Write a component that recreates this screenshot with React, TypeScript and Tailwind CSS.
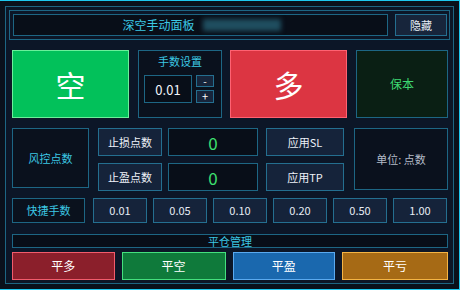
import React from "react";

const font = { fontFamily: '"Noto Sans CJK SC", "Noto Sans", sans-serif' };

export default function App() {
  const quick = ["0.01", "0.05", "0.10", "0.20", "0.50", "1.00"];
  return (
    <div
      style={font}
      className="w-[460px] h-[290px] bg-[#0a111c] border-t border-r border-b border-[#1ec8f0] pt-[5px] pl-[5px] pr-[5px] pb-[5px] box-border"
    >
      <div className="w-[449px] h-[278px] border border-[#1d6684] bg-[#0c1627] box-border flex flex-col">
        {/* header */}
        <div className="mt-[3px] ml-[3px] w-[441px] h-[30px] border border-[#1d6684] box-border flex items-center pl-[3px] pr-[2px] gap-[7px]">
          <div className="w-[375px] h-[22px] border border-[#1d6684] bg-[#080e18] box-border flex items-center justify-center text-[12px] text-[#3cc8e4] leading-none">
            <span className="ml-[2px]">深空手动面板</span>
            <span className="ml-[8px] w-[78px] h-[12px] blur-[2.5px] bg-[#1f4e60]"></span>
          </div>
          <div className="w-[52px] h-[22px] border border-[#246f90] bg-[#17253b] box-border flex items-center justify-center text-[11px] text-[#e8eef6] leading-none">
            隐藏
          </div>
        </div>

        <div className="ml-[6px] mt-[10px] w-[436px] flex flex-col">
          {/* row 1 */}
          <div className="flex h-[68px]">
            <div className="w-[117px] h-full bg-[#02c15a] border border-[#6af09a] box-border flex items-center justify-center text-[30px] text-white leading-none">
              空
            </div>
            <div className="ml-[9px] w-[84px] h-full border border-[#1d6684] bg-[#0a111d] box-border flex flex-col items-center">
              <div className="mt-[5px] text-[11px] text-[#3cc8e4] leading-none">手数设置</div>
              <div className="mt-[8px] flex w-full pl-[5px] gap-[4px]">
                <div className="w-[48px] h-[28px] border border-[#1d6684] bg-[#080e18] box-border flex items-center justify-center text-[13px] text-[#f0f4fa] leading-none">
                  0.01
                </div>
                <div className="flex flex-col gap-[3px]">
                  <div className="w-[18px] h-[12px] border border-[#246f90] bg-[#17253b] box-border flex items-center justify-center text-[10px] text-white leading-none">
                    -
                  </div>
                  <div className="w-[18px] h-[13px] border border-[#246f90] bg-[#17253b] box-border flex items-center justify-center text-[11px] text-white leading-none">
                    +
                  </div>
                </div>
              </div>
            </div>
            <div className="ml-[8px] w-[117px] h-full bg-[#dc3542] border border-[#ff6272] box-border flex items-center justify-center text-[30px] text-white leading-none">
              多
            </div>
            <div className="ml-[9px] w-[92px] h-full bg-[#0a1f14] border border-[#1d6684] box-border flex items-center justify-center text-[12px] text-[#3ed872] leading-none">
              保本
            </div>
          </div>

          {/* row 2 */}
          <div className="flex h-[63px] mt-[10px]">
            <div className="w-[77px] h-[60px] border border-[#1d6684] bg-[#0a111d] box-border flex items-center justify-center text-[11px] text-[#3cc8e4] leading-none">
              风控点数
            </div>
            <div className="ml-[9px] flex flex-col gap-[7px]">
              {[
                ["止损点数", "应用SL"],
                ["止盈点数", "应用TP"],
              ].map(([a, b]) => (
                <div key={a} className="flex h-[28px]">
                  <div className="w-[64px] h-full border border-[#246f90] bg-[#15233a] box-border flex items-center justify-center text-[11px] text-[#eef2f8] leading-none">
                    {a}
                  </div>
                  <div className="ml-[6px] w-[90px] h-full border border-[#1d6684] bg-[#080e18] box-border flex items-center justify-center text-[17px] text-[#3ee070] leading-none">
                    0
                  </div>
                  <div className="ml-[8px] w-[78px] h-full border border-[#246f90] bg-[#15233a] box-border flex items-center justify-center text-[11px] text-[#eef2f8] leading-none">
                    {b}
                  </div>
                </div>
              ))}
            </div>
            <div className="ml-[10px] w-[94px] h-[62px] border border-[#1d6684] bg-[#0a111d] box-border flex items-center justify-center text-[11px] text-[#b4bcc8] leading-none">
              单位: 点数
            </div>
          </div>

          {/* row 3 */}
          <div className="flex h-[25px] mt-[7px]">
            <div className="w-[73px] h-full border border-[#1d6684] bg-[#0a111d] box-border flex items-center justify-center text-[11px] text-[#3cc8e4] leading-none">
              快捷手数
            </div>
            <div className="ml-[8px] flex gap-[6px]">
              {quick.map((q) => (
                <div
                  key={q}
                  className="w-[54px] h-[25px] border border-[#246f90] bg-[#15233a] box-border flex items-center justify-center text-[11px] text-[#e6ecf4] leading-none"
                >
                  {q}
                </div>
              ))}
            </div>
          </div>

          {/* row 4 */}
          <div className="mt-[11px] h-[14px] border border-[#1d6684] bg-[#080e18] box-border flex items-center justify-center text-[11px] text-[#3cc8e4] leading-none">
            平仓管理
          </div>

          {/* row 5 */}
          <div className="mt-[4px] flex gap-[7px] h-[28px]">
            <div className="w-[103px] h-full bg-[#8b1f2b] border border-[#f25c6c] box-border flex items-center justify-center text-[12px] text-white leading-none">
              平多
            </div>
            <div className="w-[104px] h-full bg-[#0f7a3b] border border-[#44e07e] box-border flex items-center justify-center text-[12px] text-white leading-none">
              平空
            </div>
            <div className="w-[103px] h-full bg-[#1a68ae] border border-[#5aaaf0] box-border flex items-center justify-center text-[12px] text-white leading-none">
              平盈
            </div>
            <div className="w-[106px] h-full bg-[#a66a15] border border-[#f4b444] box-border flex items-center justify-center text-[12px] text-white leading-none">
              平亏
            </div>
          </div>
        </div>
      </div>
    </div>
  );
}
